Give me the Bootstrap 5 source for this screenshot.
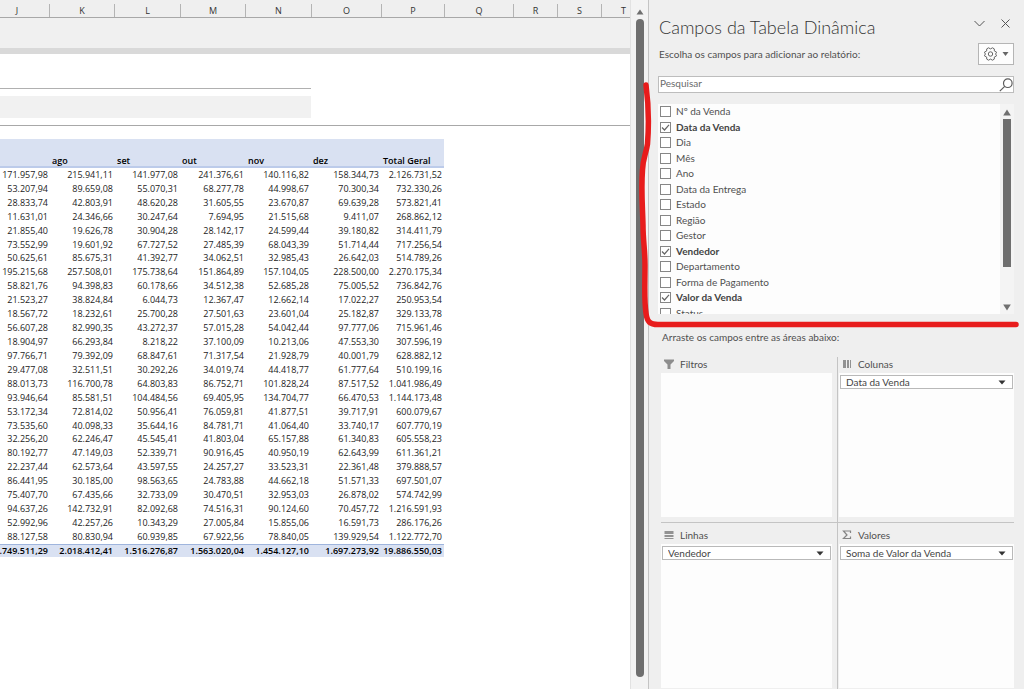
<!DOCTYPE html>
<html lang="pt-BR">
<head>
<meta charset="utf-8">
<meta name="viewport" content="width=device-width, initial-scale=1">
<title>Campos da Tabela Dinâmica</title>
<link href="https://cdn.jsdelivr.net/npm/bootstrap@5.3.0/dist/css/bootstrap.min.css" rel="stylesheet">
<style>
  body { font-family: "Open Sans", "Noto Sans", sans-serif; font-size: 10px; line-height: 14px; color: #505050; background: #efefef; }
  .sheet { background: #fff; min-width: 0; color: #1c1c1c; }
  .letters { height: 18px; margin-left: -15px; padding-top: 4px; background: #efefef; border-bottom: 1px solid #a8a8a8; font-size: 9px; color: #333; }
  .letters span { border-right: 1px solid #b4b4b4; text-align: center; flex: none; }
  .frozen { height: 30px; background: #f0f0f0; }
  .freeze-bar { height: 6px; background: #d9d9d9; }
  .title-rule { width: 311px; margin-top: 34px; border-top: 1px solid #b0b0b0; }
  .title-fill { width: 311px; height: 22px; margin-top: 7px; background: #f1f1f1; }
  .wide-rule { margin-top: 7px; border-top: 1px solid #a8a8a8; }
  .pivot { width: 460px; height: 418px; margin: 13px 0 0 -16px; table-layout: fixed; border-collapse: separate; border-spacing: 0; font-size: 9px; line-height: 12px; text-align: right; white-space: nowrap; }
  .pivot th, .pivot td { padding: 0 2px; }
  .pivot thead th { height: 29px; background: #d9e1f2; border-bottom: 2px solid #bccbea; text-align: left; vertical-align: bottom; font-weight: 600; line-height: 10px; color: #000; }
  .pivot tbody td { vertical-align: middle; }
  .pivot tfoot td { background: #d9e1f2; border-top: 1px solid #9fb5dd; font-weight: 600; color: #000; }
  .gutter { width: 18px; background: #f3f3f3; border-left: 1px solid #e2e2e2; padding: 9px 5px 12px; gap: 4px; }
  .thumb { width: 8px; border-radius: 4px; background: #6f6f6f; }
  .pane { width: 376px; border-left: 1px solid #c4c4c4; padding: 0 10px 0 9px; font-family: Lato, "Open Sans", sans-serif; }
  .pane h1 { font-size: 18px; line-height: 24px; font-weight: 300; color: #333; }
  .pane-head { padding: 15px 0 0 1px; height: 43px; }
  .plain-btn { border: 0; background: none; padding: 0; line-height: 0; }
  .intro { padding-left: 1px; }
  .gear-btn { width: 36px; height: 22px; background: #fdfdfd; border: 1px solid #b5b5b5; padding: 0; }
  .search-box { height: 17px; margin-top: 11px; background: #fff; border: 1px solid #bdbdbd; }
  .search-box input { font-size: 10px; line-height: 13px; padding: 0 1px 2px; border: 0; background: none; color: #555; min-width: 0; }
  .search-box input::placeholder { color: #6a6a6a; }
  .field-box { height: 210px; margin-top: 11px; background: #fdfdfd; }
  .fields { height: 217px; padding-left: 2px; }
  .fields label { font-size: 10px; line-height: 13px; }
  .fields input { appearance: none; width: 11px; height: 11px; margin: 0 5px 0 0; border: 1px solid #868686; background: #fff no-repeat center / 9px 9px; }
  .fields input:checked { background-image: url("data:image/svg+xml,%3Csvg xmlns='http://www.w3.org/2000/svg' viewBox='0 0 9 9'%3E%3Cpath d='M1 4.5 3.5 7 8 1.8' fill='none' stroke='%23666' stroke-width='1.2'/%3E%3C/svg%3E"); }
  .fields input:checked + span { font-weight: 700; color: #444; }
  .list-scroll { width: 14px; background: #f4f4f4; padding: 5px 3px 3px; gap: 3px; }
  .list-thumb { width: 8px; height: 148px; background: #6f6f6f; }
  .drag-note { padding: 16px 0 13px 4px; }
  .areas { margin-left: 3px; }
  .area-row:first-child { border-bottom: 1px solid #c4c4c4; }
  .area-row:first-child .drop-area { padding-bottom: 5px; }
  .area-row:last-child .drop-area { padding: 5px 0 1px; }
  .area-left { width: 176px; }
  .area-left .drop-zone { margin-right: 5px; }
  .area-right { border-left: 1px solid #c4c4c4; }
  .area-right .drop-zone { margin-left: 1px; }
  .drop-label { height: 16px; gap: 6px; padding: 0 3px 2px; }
  .drop-zone { background: #fdfdfd; padding: 2px 1px; }
  .drop-zone select { display: block; width: 100%; height: 14px; padding: 0 18px 0 5px; border: 1px solid #b9b9b9; border-radius: 0; appearance: none; font-size: 10px; line-height: 12px; color: #444; background: #fff no-repeat right 6px center / 8px 5px url("data:image/svg+xml,%3Csvg xmlns='http://www.w3.org/2000/svg' viewBox='0 0 8 5'%3E%3Cpath d='M.5.5h7L4 4.5z' fill='%23333'/%3E%3C/svg%3E"); }
  .red-mark { left: 634px; top: 80px; pointer-events: none; }
</style>
</head>
<body>
<div class="d-flex min-vh-100 position-relative overflow-hidden">
  <main class="sheet flex-fill overflow-hidden">
    <div class="letters d-flex" id="letters"></div>
    <div class="frozen"></div>
    <div class="freeze-bar"></div>
    <div class="title-rule"></div>
    <div class="title-fill"></div>
    <div class="wide-rule"></div>
    <table class="pivot">
      <colgroup><col style="width:66px"><col style="width:65px"><col style="width:65px"><col style="width:66px"><col style="width:65px"><col style="width:70px"><col style="width:63px"></colgroup>
      <thead><tr><th></th><th>ago</th><th>set</th><th>out</th><th>nov</th><th>dez</th><th>Total Geral</th></tr></thead>
      <tbody id="rows"></tbody>
      <tfoot><tr><td>1.749.511,29</td><td>2.018.412,41</td><td>1.516.276,87</td><td>1.563.020,04</td><td>1.454.127,10</td><td>1.697.273,92</td><td>19.886.550,03</td></tr></tfoot>
    </table>
  </main>

  <div class="gutter d-flex flex-column align-items-center flex-shrink-0">
    <svg width="8" height="6" viewBox="0 0 8 6"><path d="M4 .5 7.5 5.5H.5z" fill="#6f6f6f"/></svg>
    <div class="thumb flex-fill"></div>
  </div>

  <aside class="pane d-flex flex-column flex-shrink-0">
    <div class="pane-head d-flex align-items-start">
      <h1 class="m-0 me-auto">Campos da Tabela Dinâmica</h1>
      <button class="plain-btn mt-1 me-3" type="button" aria-label="Opções do painel"><svg width="11" height="9" viewBox="0 0 11 9"><path d="M.5 2 5.5 7 10.500 2" fill="none" stroke="#555"/></svg></button>
      <button class="plain-btn mt-1 me-1" type="button" aria-label="Fechar"><svg width="9" height="9" viewBox="0 0 9 9"><path d="M.5.5l8 8M8.500.5l-8 8" fill="none" stroke="#555"/></svg></button>
    </div>
    <div class="d-flex align-items-center">
      <div class="intro me-auto">Escolha os campos para adicionar ao relatório:</div>
      <button class="gear-btn d-flex align-items-center justify-content-center gap-1" type="button" aria-label="Ferramentas">
        <svg width="15" height="14" viewBox="0 0 15 14" fill="none" stroke="#666" stroke-linejoin="round"><path d="M5.500.8 7.500 1.900 9.500.8 11.300 1.900V3.900L13.600 5.200 12.600 7 13.600 8.800 11.300 10.100V12.100L9.500 13.200 7.500 12.100 5.500 13.200 3.700 12.100V10.100L1.400 8.800 2.400 7 1.400 5.200 3.700 3.900V1.900z"/><circle cx="7.500" cy="7" r="2.200"/></svg>
        <svg width="7" height="4" viewBox="0 0 7 4"><path d="M.5 0h6l-3 4z" fill="#666"/></svg>
      </button>
    </div>
    <div class="search-box d-flex align-items-center">
      <input class="flex-fill" type="text" placeholder="Pesquisar" aria-label="Pesquisar">
      <svg width="14" height="14" viewBox="0 0 14 14" fill="none" stroke="#5c5c5c" stroke-width="1.200"><circle cx="8.800" cy="5.200" r="4.300"/><path d="M5.700 8.300.8 13.200"/></svg>
    </div>
    <div class="field-box d-flex overflow-hidden">
      <div class="fields flex-fill d-flex flex-column" id="fields"></div>
      <div class="list-scroll d-flex flex-column align-items-center">
        <svg width="8" height="7" viewBox="0 0 8 7"><path d="M4 .5 7.800 6.500H.2z" fill="#6f6f6f"/></svg>
        <div class="list-thumb"></div>
        <svg class="mt-auto" width="8" height="7" viewBox="0 0 8 7"><path d="M4 6.500 7.800.5H.2z" fill="#6f6f6f"/></svg>
      </div>
    </div>
    <div class="drag-note">Arraste os campos entre as áreas abaixo:</div>
    <div class="areas flex-fill d-flex flex-column">
      <div class="area-row d-flex flex-fill">
        <section class="drop-area area-left d-flex flex-column">
          <div class="drop-label d-flex align-items-center"><svg width="10" height="10" viewBox="0 0 10 10"><path d="M0 .5h10v1.500L6.500 5.500V10h-3V5.500L0 2z" fill="#8d8d8d"/></svg>Filtros</div>
          <div class="drop-zone flex-fill"></div>
        </section>
        <section class="drop-area area-right flex-fill d-flex flex-column">
          <div class="drop-label d-flex align-items-center ps-1"><svg width="10" height="10" viewBox="0 0 10 10"><path d="M1 1h3v8H1zM5 1h2v8H5zM8 1h1v8H8z" fill="#929292"/></svg><label for="cols">Colunas</label></div>
          <div class="drop-zone flex-fill"><select id="cols"><option>Data da Venda</option></select></div>
        </section>
      </div>
      <div class="area-row d-flex flex-fill">
        <section class="drop-area area-left d-flex flex-column">
          <div class="drop-label d-flex align-items-center"><svg width="10" height="10" viewBox="0 0 10 10"><path d="M.5 1h9v3h-9zM.5 5h9v2h-9zM.5 8h9v1h-9z" fill="#929292"/></svg><label for="lines">Linhas</label></div>
          <div class="drop-zone flex-fill"><select id="lines"><option>Vendedor</option></select></div>
        </section>
        <section class="drop-area area-right flex-fill d-flex flex-column">
          <div class="drop-label d-flex align-items-center ps-1"><svg width="10" height="10" viewBox="0 0 10 10"><path d="M8.500 3V1H1.500L5 5 1.500 8.500h7v-2" fill="none" stroke="#858585" stroke-width="1.200"/></svg><label for="vals">Valores</label></div>
          <div class="drop-zone flex-fill"><select id="vals"><option>Soma de Valor da Venda</option></select></div>
        </section>
      </div>
    </div>
  </aside>

  <svg class="red-mark position-absolute" width="386" height="250" viewBox="634 80 386 250"><path d="M646 85C648 100 649 125 647.500 144C646 154 643 158 642.500 170C641 190 642.500 205 643 225C643 240 645 250 645 265C645 285 644 300 646 313C647 322 650 324.500 658 324.500H1016" fill="none" stroke="#e81c1c" stroke-width="5.500" stroke-linecap="round" stroke-linejoin="round"/></svg>
</div>
<script src="https://cdn.jsdelivr.net/npm/bootstrap@5.3.0/dist/js/bootstrap.bundle.min.js"></script>
<script>
  const columns = [['J',65],['K',65],['L',66],['M',65],['N',66],['O',70],['P',63],['Q',69],['R',44],['S',44],['T',44]];
  document.getElementById('letters').innerHTML = columns.map(([c, w]) => `<span style="width:${w}px">${c}</span>`).join('');
  const data = `171.957,98 215.941,11 141.977,08 241.376,61 140.116,82 158.344,73 2.126.731,52
53.207,94 89.659,08 55.070,31 68.277,78 44.998,67 70.300,34 732.330,26
28.833,74 42.803,91 48.620,28 31.605,55 23.670,87 69.639,28 573.821,41
11.631,01 24.346,66 30.247,64 7.694,95 21.515,68 9.411,07 268.862,12
21.855,40 19.626,78 30.904,28 28.142,17 24.599,44 39.180,82 314.411,79
73.552,99 19.601,92 67.727,52 27.485,39 68.043,39 51.714,44 717.256,54
50.625,61 85.675,31 41.392,77 34.062,51 32.985,43 26.642,03 514.789,26
195.215,68 257.508,01 175.738,64 151.864,89 157.104,05 228.500,00 2.270.175,34
58.821,76 94.398,83 60.178,66 34.512,38 52.685,28 75.005,52 736.842,76
21.523,27 38.824,84 6.044,73 12.367,47 12.662,14 17.022,27 250.953,54
18.567,72 18.232,61 25.700,28 27.501,63 23.601,04 25.182,87 329.133,78
56.607,28 82.990,35 43.272,37 57.015,28 54.042,44 97.777,06 715.961,46
18.904,97 66.293,84 8.218,22 37.100,09 10.213,06 47.553,30 307.596,19
97.766,71 79.392,09 68.847,61 71.317,54 21.928,79 40.001,79 628.882,12
29.477,08 32.511,51 30.292,26 34.019,74 44.418,77 61.777,64 510.199,16
88.013,73 116.700,78 64.803,83 86.752,71 101.828,24 87.517,52 1.041.986,49
93.946,64 85.581,51 104.484,56 69.405,95 134.704,77 66.470,53 1.144.173,48
53.172,34 72.814,02 50.956,41 76.059,81 41.877,51 39.717,91 600.079,67
73.535,60 40.098,33 35.644,16 84.781,71 41.064,40 33.740,17 607.770,19
32.256,20 62.246,47 45.545,41 41.803,04 65.157,88 61.340,83 605.558,23
80.192,77 47.149,03 52.339,71 90.916,45 40.950,19 62.643,99 611.361,21
22.237,44 62.573,64 43.597,55 24.257,27 33.523,31 22.361,48 379.888,57
86.441,95 30.185,00 98.563,65 24.783,88 44.662,18 51.571,33 697.501,07
75.407,70 67.435,66 32.733,09 30.470,51 32.953,03 26.878,02 574.742,99
94.637,26 142.732,91 82.092,68 74.516,31 90.124,60 70.457,72 1.216.591,93
52.992,96 42.257,26 10.343,29 27.005,84 15.855,06 16.591,73 286.176,26
88.127,58 80.830,94 60.939,85 67.922,56 78.840,05 139.929,54 1.122.772,70`;
  document.getElementById('rows').innerHTML = data.split('\n').map(r => '<tr>' + r.split(' ').map(v => `<td>${v}</td>`).join('') + '</tr>').join('');
  const fields = ['Nº da Venda','*Data da Venda','Dia','Mês','Ano','Data da Entrega','Estado','Região','Gestor','*Vendedor','Departamento','Forma de Pagamento','*Valor da Venda','Status'];
  document.getElementById('fields').innerHTML = fields.map(f => `<label class="d-flex align-items-center flex-fill"><input type="checkbox"${f[0] === '*' ? ' checked' : ''}><span>${f.replace('*', '')}</span></label>`).join('');
</script>
</body>
</html>
